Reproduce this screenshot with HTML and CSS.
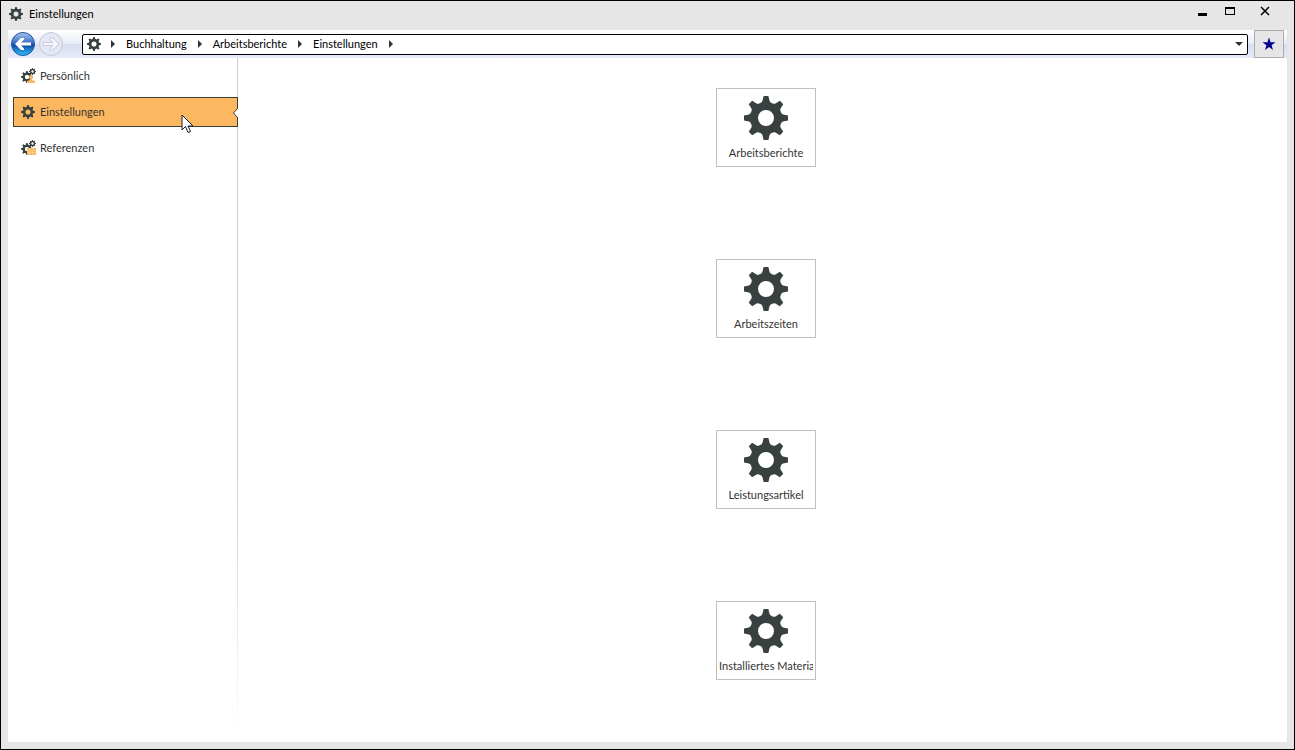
FILE: index.html
```html
<!DOCTYPE html>
<html lang="de">
<head>
    <meta charset="UTF-8">
    <meta name="viewport" content="width=device-width, initial-scale=1.0">
    <title>Einstellungen</title>
    <link rel="stylesheet" href="styles.css">
</head>
<body>
    <svg class="defs" aria-hidden="true">
        <defs>
            <path id="tooth" d="M-2.4 -22 H2.4 L3.600 -17 Q4 -15.500 6 -14.800 L5 -10 H-5 L-6 -14.800 Q-4 -15.500 -3.600 -17 Z"/>
            <symbol id="gear" viewBox="-22 -22 44 44">
                <circle r="11.8" fill="none" stroke="currentColor" stroke-width="7.600"/>
                <g fill="currentColor">
                    <use href="#tooth"/>
                    <use href="#tooth" transform="rotate(45)"/>
                    <use href="#tooth" transform="rotate(90)"/>
                    <use href="#tooth" transform="rotate(135)"/>
                    <use href="#tooth" transform="rotate(180)"/>
                    <use href="#tooth" transform="rotate(225)"/>
                    <use href="#tooth" transform="rotate(270)"/>
                    <use href="#tooth" transform="rotate(315)"/>
                </g>
            </symbol>
            <linearGradient id="blue" x1="0" y1="0" x2="0" y2="1">
                <stop offset="0" stop-color="#a9c6ee"/>
                <stop offset="0.45" stop-color="#3a70c8"/>
                <stop offset="0.55" stop-color="#0d48a8"/>
                <stop offset="1" stop-color="#35c3f5"/>
            </linearGradient>
        </defs>
    </svg>

    <div class="window">
        <header class="titlebar">
            <svg class="gear-small"><use href="#gear"/></svg>
            <h1>Einstellungen</h1>
            <div class="window-buttons">
                <button type="button" aria-label="Minimieren"><svg width="12" height="12"><path d="M2 8h9v3H2z"/></svg></button>
                <button type="button" aria-label="Maximieren"><svg width="12" height="12"><path d="M1 2h10v8H1zM2 4v5h8V4z" fill-rule="evenodd"/></svg></button>
                <button type="button" class="close" aria-label="Schließen"><svg width="12" height="12"><path d="M2 2l8 8M10 2l-8 8" stroke="#000" stroke-width="1.5"/></svg></button>
            </div>
        </header>

        <div class="navbar">
            <div class="history">
                <button type="button" aria-label="Zurück">
                    <svg width="26" height="26" viewBox="0 0 26 26">
                        <circle cx="13" cy="13" r="11.5" fill="url(#blue)" stroke="#2453a0"/>
                        <path d="M5 13l6-6h3v1.500L11 11.500h10v3H11l3 3V19h-3z" fill="#fff"/>
                    </svg>
                </button>
                <button type="button" aria-label="Vorwärts">
                    <svg width="26" height="26" viewBox="0 0 26 26">
                        <circle cx="13" cy="13" r="11.5" fill="#e4e8f4" stroke="#c2c8da"/>
                        <path d="M21 13l-6-6h-3v1.500l3 3H5v3h10l-3 3V19h3z" fill="#f5f6fb" stroke="#c6cbdc"/>
                    </svg>
                </button>
            </div>
            <nav class="breadcrumb">
                <svg class="gear-small"><use href="#gear"/></svg>
                <span class="arrow"></span>
                <a href="#">Buchhaltung</a>
                <span class="arrow"></span>
                <a href="#">Arbeitsberichte</a>
                <span class="arrow"></span>
                <a href="#">Einstellungen</a>
                <span class="arrow"></span>
                <button type="button" class="dropdown" aria-label="Verlauf"></button>
            </nav>
            <button type="button" class="favorite" aria-label="Favorit">
                <svg width="14" height="14" viewBox="0 0 14 14"><path d="M7 0.5l1.6 4.7h4.9l-3.9 3 1.4 4.8L7 10.1 3 13l1.4-4.8-3.9-3h4.9z" fill="#00008b"/></svg>
            </button>
        </div>

        <div class="content">
            <nav class="sidebar">
                <a href="#">
                    <svg width="16" height="16" viewBox="0 0 16 16">
                        <use href="#gear" x="1" y="3" width="12" height="12"/>
                        <use href="#gear" x="9" y="0" width="7" height="7"/>
                        <path d="M7 15v-2l3-1-1-3a2 2 0 0 1 4 0l-1 3 3 1v2z" fill="#fbb860"/>
                    </svg>
                    Persönlich
                </a>
                <a href="#" class="active">
                    <svg width="16" height="16" viewBox="0 0 16 16"><use href="#gear" x="1" y="1" width="14" height="14"/></svg>
                    Einstellungen
                    <svg class="notch" width="5" height="10"><path d="M5 0v10L0.500 5z" fill="#fff"/><path d="M5 0L0.500 5l4.500 5" fill="none" stroke="#3a3f3f"/></svg>
                </a>
                <a href="#">
                    <svg width="16" height="16" viewBox="0 0 16 16">
                        <use href="#gear" x="1" y="3" width="12" height="12"/>
                        <use href="#gear" x="9" y="0" width="7" height="7"/>
                        <path d="M7 8h9v7H7z" fill="#fbb860"/>
                        <path d="M7 10.500h9M7 12.500h9M9.500 8v7M12.500 8v7" stroke="#fdd9a8" stroke-width="0.500"/>
                    </svg>
                    Referenzen
                </a>
            </nav>
            <main class="tiles">
                <div class="cell"><button type="button" class="tile"><svg><use href="#gear"/></svg><span>Arbeitsberichte</span></button></div>
                <div class="cell"><button type="button" class="tile"><svg><use href="#gear"/></svg><span>Arbeitszeiten</span></button></div>
                <div class="cell"><button type="button" class="tile"><svg><use href="#gear"/></svg><span>Leistungsartikel</span></button></div>
                <div class="cell"><button type="button" class="tile"><svg><use href="#gear"/></svg><span>Installiertes Material</span></button></div>
            </main>
        </div>
    </div>

    <svg class="cursor" width="13" height="20" viewBox="0 0 13 20">
        <path d="M1 1v15l3.500-3.500L7 18.500l2.500-1L7 12h5z" fill="#fff" stroke="#1c1c2c"/>
    </svg>
</body>
</html>
```
FILE: styles.css
```css
* {
    box-sizing: border-box;
}

body {
    margin: 0;
    font-family: Lato, "Open Sans", sans-serif;
    font-size: 11px;
    line-height: 16px;
    color: #333;
}

button {
    padding: 0;
    border: none;
    background: none;
    font: inherit;
    color: inherit;
}

a {
    color: inherit;
    text-decoration: none;
}

svg {
    display: block;
    flex: none;
}

.defs {
    position: absolute;
    width: 0;
    height: 0;
}

.window {
    display: flex;
    flex-direction: column;
    height: 100vh;
    padding: 0 7px 7px;
    border: 1px solid #000;
    background-color: #e6e6e6;
}

.gear-small {
    width: 14px;
    height: 14px;
    color: #384040;
}

/* title bar */
.titlebar {
    display: flex;
    align-items: center;
    height: 29px;
    padding: 0 16px 4px 1px;
    color: #000;
}

.titlebar h1 {
    margin: 0 auto 0 6px;
    font-size: 11px;
    font-weight: normal;
}

.window-buttons {
    display: flex;
    gap: 16px;
    padding-bottom: 6px;
}

.window-buttons .close {
    margin-left: 7px;
}

/* navigation */
.navbar {
    display: flex;
    align-items: center;
    height: 28px;
    padding: 0 3px 0 2px;
    background: linear-gradient(#fff, #e8ecf8 50%, #d8def0 52%, #e6eafa);
    color: #000;
}

.history {
    display: flex;
    gap: 2px;
    margin-right: 18px;
}

.breadcrumb {
    display: flex;
    flex: 1;
    align-items: center;
    height: 21px;
    margin-right: 6px;
    padding: 0 4px;
    border: 1px solid #000;
    border-radius: 2px;
    background-color: #fff;
}

.arrow {
    margin: 0 11px;
    border: 4px solid transparent;
    border-left-color: #333;
    border-right: none;
}

.breadcrumb .gear-small + .arrow {
    margin-left: 10px;
}

.dropdown {
    margin-left: auto;
    border: 4px solid transparent;
    border-top-color: #333;
    border-bottom: none;
}

.favorite {
    display: flex;
    align-items: center;
    justify-content: center;
    width: 30px;
    height: 28px;
    border: 1px solid #acacac;
    background-color: #e6e6e6;
}

/* content */
.content {
    display: flex;
    flex: 1;
    min-height: 0;
    background-color: #fff;
}

.sidebar {
    display: flex;
    flex-direction: column;
    gap: 6px;
    width: 230px;
    padding: 3px 0 0 5px;
    background: linear-gradient(#d0d0d0, #d0d0d0 60%, #fff) right / 1px 100% no-repeat;
}

.sidebar a {
    position: relative;
    display: flex;
    align-items: center;
    gap: 4px;
    height: 30px;
    padding-left: 6px;
    border: 1px solid transparent;
}

.sidebar svg {
    color: #384040;
}

.sidebar .active {
    border-color: #3a3f3f;
    background-color: #fbb860;
}

.sidebar .notch {
    position: absolute;
    top: 10px;
    right: -1px;
}

.tiles {
    display: grid;
    flex: 1;
    grid-template-rows: repeat(4, 1fr);
    padding-left: 7px;
}

.cell {
    display: flex;
    justify-content: center;
    align-items: flex-start;
    padding-top: 30px;
}

.tile {
    width: 100px;
    height: 79px;
    padding: 2px 2px 0;
    border: 1px solid #c0c0c0;
    background-color: #fff;
}

.tile svg {
    width: 44px;
    height: 44px;
    margin: 0 auto 5px;
    color: #384040;
}

.tile span {
    display: block;
    overflow: hidden;
    white-space: nowrap;
}

.cursor {
    position: absolute;
    left: 181px;
    top: 114px;
}
```
